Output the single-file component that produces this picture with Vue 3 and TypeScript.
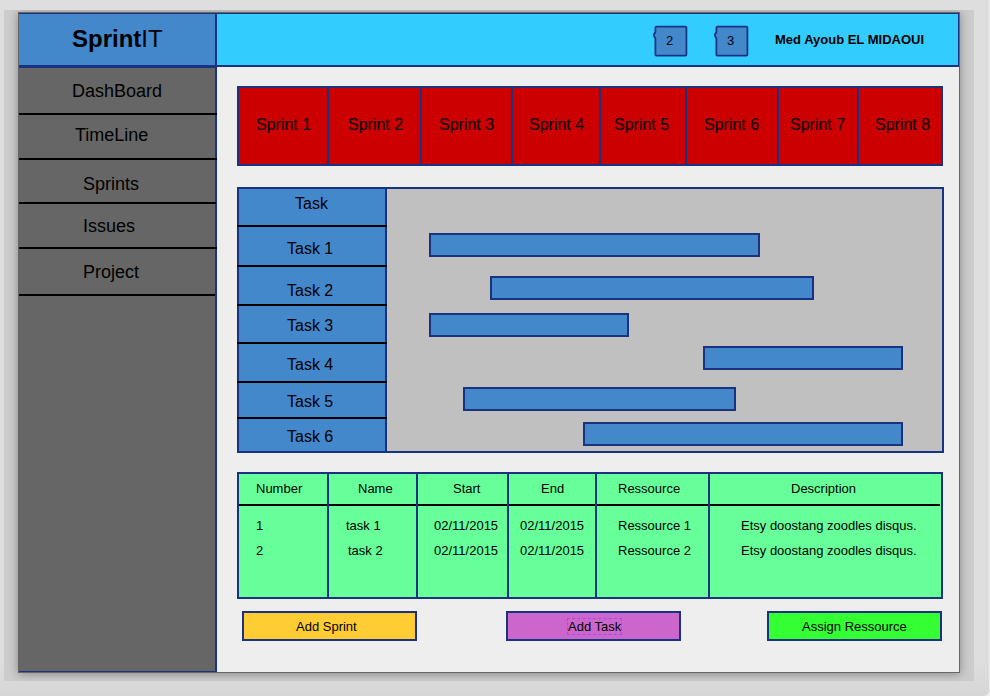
<script setup lang="ts">
interface MenuItem { label: string; height: number; top: number; left: number; over: number }
interface Sprint { label: string; width: number; left: number }
interface Task { label: string; height: number; top: number; left: number }
interface Bar { gap: number; start: number; width: number }
interface Cell { text: string; left: number }
interface Column { head: Cell; rows: Cell[]; width: number }

const px = (n: number): string => `${n}px`

const menu: MenuItem[] = [
  { label: 'DashBoard', height: 47, top: 13, left: 53, over: 2 },
  { label: 'TimeLine', height: 45, top: 10, left: 56, over: 2 },
  { label: 'Sprints', height: 44, top: 14, left: 64, over: 1 },
  { label: 'Issues', height: 45, top: 12, left: 64, over: 2 },
  { label: 'Project', height: 47, top: 13, left: 64, over: 0 },
]

const sprints: Sprint[] = [
  { label: 'Sprint 1', width: 90, left: 17 },
  { label: 'Sprint 2', width: 93, left: 19 },
  { label: 'Sprint 3', width: 91, left: 17 },
  { label: 'Sprint 4', width: 88, left: 16 },
  { label: 'Sprint 5', width: 86, left: 13 },
  { label: 'Sprint 6', width: 92, left: 17 },
  { label: 'Sprint 7', width: 80, left: 11 },
  { label: 'Sprint 8', width: 82, left: 16 },
]

const tasks: Task[] = [
  { label: 'Task', height: 38, top: 6, left: 58 },
  { label: 'Task 1', height: 40, top: 13, left: 50 },
  { label: 'Task 2', height: 39, top: 15, left: 50 },
  { label: 'Task 3', height: 38, top: 11, left: 50 },
  { label: 'Task 4', height: 39, top: 12, left: 50 },
  { label: 'Task 5', height: 36, top: 10, left: 50 },
  { label: 'Task 6', height: 32, top: 9, left: 50 },
]

const bars: Bar[] = [
  { gap: 44, start: 42, width: 331 },
  { gap: 19, start: 103, width: 324 },
  { gap: 13, start: 42, width: 200 },
  { gap: 9, start: 316, width: 200 },
  { gap: 17, start: 76, width: 273 },
  { gap: 11, start: 196, width: 320 },
]

const columns: Column[] = [
  { head: { text: 'Number', left: 17 }, rows: [{ text: '1', left: 17 }, { text: '2', left: 17 }], width: 90 },
  { head: { text: 'Name', left: 29 }, rows: [{ text: 'task 1', left: 17 }, { text: 'task 2', left: 19 }], width: 89 },
  { head: { text: 'Start', left: 35 }, rows: [{ text: '02/11/2015', left: 16 }, { text: '02/11/2015', left: 16 }], width: 91 },
  { head: { text: 'End', left: 32 }, rows: [{ text: '02/11/2015', left: 11 }, { text: '02/11/2015', left: 11 }], width: 88 },
  { head: { text: 'Ressource', left: 21 }, rows: [{ text: 'Ressource 1', left: 21 }, { text: 'Ressource 2', left: 21 }], width: 113 },
  { head: { text: 'Description', left: 81 }, rows: [{ text: 'Etsy doostang zoodles disqus.', left: 31 }, { text: 'Etsy doostang zoodles disqus.', left: 31 }], width: 231 },
]

const badges: number[] = [2, 3]
</script>

<template>
  <div class="desktop">
    <div class="stage">
      <div class="page">
        <aside class="sidebar">
          <div class="logo"><b>Sprint</b>IT</div>
          <nav class="menu">
            <a
              v-for="m in menu"
              :key="m.label"
              class="menu-item"
              :style="{ height: px(m.height), paddingTop: px(m.top), paddingLeft: px(m.left), marginRight: px(-m.over) }"
            >{{ m.label }}</a>
          </nav>
        </aside>
        <div class="main">
          <header class="topbar">
            <div v-for="b in badges" :key="b" class="badge">
              <svg class="badge-shape" width="36" height="33" viewBox="0 0 36 33">
                <path d="M3.6 1.6H32.4Q33.4 1.6 33.4 2.6V29.6Q33.4 30.6 32.4 30.6H3.4Q2.4 30.6 2.4 29.6V14Q2.4 12.8 1.4 11.6Q0.4 10 1.4 8.6Q2.6 7.4 2.4 6V2.8Q2.4 1.6 3.6 1.6Z" />
              </svg>
              <span class="badge-count">{{ b }}</span>
            </div>
            <strong class="user">Med Ayoub EL MIDAOUI</strong>
          </header>

          <section class="sprints">
            <div
              v-for="s in sprints"
              :key="s.label"
              class="sprint"
              :style="{ width: px(s.width), paddingLeft: px(s.left) }"
            >{{ s.label }}</div>
          </section>

          <section class="gantt">
            <div class="task-list">
              <div
                v-for="t in tasks"
                :key="t.label"
                class="task"
                :style="{ height: px(t.height), paddingTop: px(t.top), paddingLeft: px(t.left) }"
              >{{ t.label }}</div>
            </div>
            <div class="chart">
              <div
                v-for="(b, i) in bars"
                :key="i"
                class="bar"
                :style="{ marginTop: px(b.gap), marginLeft: px(b.start), width: px(b.width) }"
              ></div>
            </div>
          </section>

          <section class="table">
            <div v-for="c in columns" :key="c.head.text" class="column" :style="{ width: px(c.width) }">
              <div class="head" :style="{ paddingLeft: px(c.head.left) }">{{ c.head.text }}</div>
              <div v-for="(r, i) in c.rows" :key="i" class="cell" :style="{ paddingLeft: px(r.left) }">{{ r.text }}</div>
            </div>
          </section>

          <footer class="actions">
            <button class="btn add-sprint">Add Sprint</button>
            <button class="btn add-task"><span class="focus">Add Task</span></button>
            <button class="btn assign">Assign Ressource</button>
          </footer>
        </div>
      </div>
    </div>
  </div>
</template>

<style>
body {
  background: #eeeeee;
}
</style>

<style scoped>
.desktop,
.desktop * {
  box-sizing: border-box;
}
.desktop {
  --navy: #1a3380;
  --blue: #4488cc;
  width: 989px;
  height: 696px;
  padding: 10px 15px 15px 4px;
  background: linear-gradient(#dedede 0, #dedede 660px, #d6d6d6 100%);
  border-bottom-right-radius: 5px;
  font-family: "Liberation Sans", Arial, sans-serif;
  color: #000;
  white-space: nowrap;
}
.stage {
  height: 671px;
  padding: 2px 14px 8px;
  background: #cccccc;
  overflow: hidden;
}
.page {
  display: flex;
  width: 942px;
  height: 661px;
  border: 1px solid #666;
  background: #eeeeee;
  box-shadow: 0 1px 9px rgba(0, 0, 0, 0.35);
}
.sidebar {
  width: 198px;
  flex: none;
  background: #666;
  border: solid var(--navy);
  border-width: 1px 2px 1px 0;
}
.logo {
  height: 54px;
  padding: 11px 0 0 53px;
  background: var(--blue);
  border-bottom: 3px solid var(--navy);
  font-size: 24px;
  line-height: 27px;
}
.menu {
  display: flex;
  flex-direction: column;
}
.menu-item {
  position: relative;
  border-bottom: 2px solid #000;
  font-size: 18px;
  line-height: 20px;
}
.main {
  flex: 1;
  min-width: 0;
}
.topbar {
  display: flex;
  height: 54px;
  padding: 11px 0 0 436px;
  background: #33ccff;
  border: solid var(--navy);
  border-width: 1px 1px 2px 0;
}
.badge {
  display: grid;
  width: 36px;
  height: 33px;
  margin-right: 25px;
}
.badge-shape,
.badge-count {
  grid-area: 1 / 1;
}
.badge-shape path {
  fill: var(--blue);
  stroke: var(--navy);
  stroke-width: 1.8;
}
.badge-count {
  padding: 8px 0 0 13px;
  font-size: 13px;
  line-height: 15px;
}
.user {
  margin-top: 7px;
  font-size: 13px;
  line-height: 15px;
}
.sprints {
  display: flex;
  width: 706px;
  height: 80px;
  margin: 19px 0 0 20px;
  background: #cc0000;
  border: 2px solid var(--navy);
}
.sprint {
  flex: none;
  padding-top: 28px;
  border-right: 2px solid var(--navy);
  font-size: 16px;
  line-height: 18px;
}
.sprint:last-child {
  border-right: 0;
}
.gantt {
  display: flex;
  width: 707px;
  height: 266px;
  margin: 21px 0 0 20px;
  background: #c0c0c0;
  border: solid var(--navy);
  border-width: 2px 2px 2px 0;
}
.task-list {
  width: 150px;
  background: var(--blue);
  border: solid var(--navy);
  border-width: 0 2px;
}
.task {
  margin: 0 -2px;
  border-bottom: 2px solid #000;
  position: relative;
  font-size: 16px;
  line-height: 18px;
}
.task:last-child {
  border-bottom: 0;
}
.chart {
  flex: 1;
  display: flex;
  flex-direction: column;
}
.bar {
  height: 24px;
  background: var(--blue);
  border: 2px solid var(--navy);
}
.table {
  display: flex;
  width: 706px;
  height: 127px;
  margin: 19px 0 0 20px;
  background: #66ff99;
  border: 2px solid var(--navy);
  font-size: 13px;
  line-height: 15px;
}
.column {
  flex: none;
  border-right: 2px solid var(--navy);
}
.column:last-child {
  border-right: 0;
}
.head {
  height: 32px;
  padding-top: 7px;
  margin-bottom: 12px;
  border-bottom: 2px solid #000;
}
.column:last-child .head {
  margin-right: 1px;
}
.cell {
  margin-bottom: 10px;
}
.actions {
  display: flex;
  width: 700px;
  margin: 12px 0 0 25px;
}
.btn {
  width: 175px;
  height: 30px;
  padding: 6px 0 0;
  border: 2px solid var(--navy);
  font: 13px/15px "Liberation Sans", Arial, sans-serif;
  color: #000;
  display: flex;
  align-items: flex-start;
}
.add-sprint {
  padding-left: 52px;
  background: #ffcc33;
}
.add-task {
  margin-left: 89px;
  padding-left: 60px;
  background: #cc66cc;
}
.assign {
  margin-left: auto;
  padding-left: 33px;
  background: #33ff33;
}
.focus {
  outline: 1px dashed #9d52dd;
}
</style>
